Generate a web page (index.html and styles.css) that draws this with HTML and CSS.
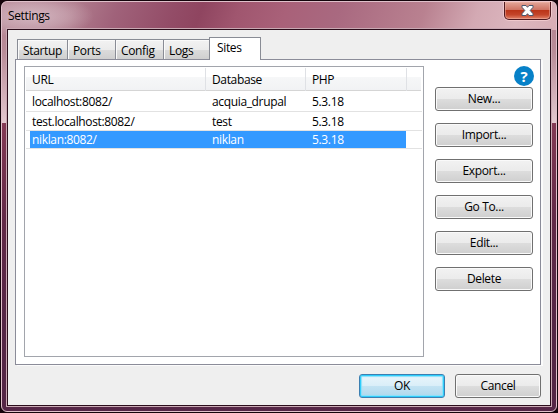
FILE: index.html
```html
<!DOCTYPE html>
<html lang="en">
<head>
<meta charset="utf-8">
<title>Settings</title>
<link rel="stylesheet" href="styles.css">
</head>
<body>
<div class="window">
  <header class="titlebar">
    <span class="title">Settings</span>
    <button class="close" aria-label="Close">
      <svg width="13" height="11" viewBox="0 0 13 11"><path class="x-edge" d="M1 .5h4l1.5 1.8L8 .5h4v1.8L9.2 5.5 12 8.7v1.8H8L6.5 8.7 5 10.500H1V8.700L3.800 5.500 1 2.300z"/></svg>
    </button>
  </header>
  <main class="client">
    <nav class="tabs">
      <span class="tab startup"><span class="t">Startup</span></span>
      <span class="tab ports"><span class="t">Ports</span></span>
      <span class="tab config"><span class="t">Config</span></span>
      <span class="tab logs"><span class="t">Logs</span></span>
      <span class="tab active"><span class="t">Sites</span></span>
    </nav>
    <section class="panel">
      <div class="list">
        <div class="row head"><span>URL</span><span>Database</span><span>PHP</span></div>
        <div class="row first"><span>localhost:8082/</span><span>acquia_drupal</span><span>5.3.18</span></div>
        <div class="row second"><span>test.localhost:8082/</span><span>test</span><span>5.3.18</span></div>
        <div class="row selected"><span>niklan:8082/</span><span>niklan</span><span>5.3.18</span></div>
      </div>
      <div class="side">
        <div class="help">?</div>
        <button class="btn">New...</button>
        <button class="btn">Import...</button>
        <button class="btn">Export...</button>
        <button class="btn">Go To...</button>
        <button class="btn">Edit...</button>
        <button class="btn">Delete</button>
      </div>
    </section>
    <footer class="actions">
      <button class="btn ok">OK</button>
      <button class="btn">Cancel</button>
    </footer>
  </main>
</div>
</body>
</html>
```
FILE: styles.css
```css
* { box-sizing: border-box; }
body {
  margin: 0;
  background: #14040b;
  font: 12px/16px "Open Sans", "Noto Sans", sans-serif;
  letter-spacing: -0.35px;
  color: #000;
  overflow: hidden;
}
.window {
  width: 556px;
  height: 411px;
  margin: 1px;
  padding: 0 5px 4px 5px;
  border: 1px solid #dfc0ca;
  border-radius: 6px;
  background:
    radial-gradient(ellipse 62px 22px at 30px 14px, #e2ced5b0 0, #e2ced560 55%, transparent 100%) no-repeat,
    linear-gradient(110deg, #b58695 0, #b07c8d 70px, #a0627a 110px, #934c67 165px, #8f4560 190px, #a0566f 225px, #a96179 270px, #a96980 320px, #b98190 400px, #d3a9b3 450px, #dcb6be 490px, #d6a6ae 560px) 0 0 / 100% 28px no-repeat,
    linear-gradient(#b27e8f 0, #b98c98 50px, #e3c8cf 121px, #843a55 121px, #622947 220px, #552646 320px, #552646 100%);
}
.titlebar {
  height: 27px;
  display: flex;
  justify-content: space-between;
  align-items: flex-start;
}
.title {
  margin: 6px 0 0 1px;
}
.close {
  width: 47px;
  height: 18px;
  padding: 0;
  margin-right: 0;
  display: flex;
  justify-content: center;
  align-items: center;
  border: 1px solid #4f1a20;
  border-top: 0;
  border-radius: 0 0 5px 5px;
  background: linear-gradient(#e3a699 0, #cf7464 45%, #bb3519 50%, #c4452a 75%, #e2836a 100%);
  box-shadow: 0 0 0 1px #f0c8cc, inset 0 0 0 1px #f0b5a980;
}
.x-edge { fill: #fff; stroke: #4b5870; stroke-width: 1; }
.client {
  width: 544px;
  height: 377px;
  border: 1px solid #2b0d1b;
  outline: 1px solid #c9a9b3;
  background: #efefef;
  padding: 7px 9px 0 7px;
}
.tabs {
  height: 22px;
  display: flex;
  align-items: flex-end;
  padding-left: 2px;
}
.tab {
  height: 20px;
  padding: 3px 0 0 5px;
  border: 1px solid #898c95;
  border-bottom: 0;
  margin-right: -1px;
  box-shadow: inset 1px 1px #fafafa;
  background: linear-gradient(#f2f2f2 0, #ebebeb 50%, #dcdcdc 50%, #cfcfcf 100%);
}
.startup { width: 51px; }
.ports, .config { width: 49px; }
.logs { width: 47px; }
.tab.active {
  width: 52px;
  height: 23px;
  margin-bottom: -1px;
  padding: 2px 0 0 7px;
  background: #fff;
  box-shadow: none;
  z-index: 1;
}
.panel {
  width: 526px;
  height: 306px;
  border: 1px solid #8b8c99;
  box-shadow: 2px 1px #fbfbfb;
  background: #fff;
  display: flex;
  gap: 11px;
  padding: 6px 0 0 8px;
}
.list {
  width: 400px;
  height: 291px;
  border: 1px solid #a2a5ac;
  padding: 1px;
}
.row {
  display: grid;
  grid-template-columns: 180px 100px 101px;
  height: 19px;
  padding-left: 6px;
  border-bottom: 1px solid #e2e2e2;
  line-height: 18px;
}
.row.head {
  height: 23px;
  padding-left: 0;
  border-bottom-color: #d5d5d5;
  background: linear-gradient(#fff 0, #fff 9px, #f6f7f8 9px, #f1f2f4 100%);
  line-height: 23px;
  margin: 0 1px 0 0;
}
.row.head span { border-right: 1px solid #dfe1e5; padding-left: 6px; }
.row.first { height: 21px; line-height: 22px; }
.row.second { line-height: 20px; }
.row.selected {
  height: 18px;
  color: #fff;
  background: linear-gradient(#39f, #39f) 4px 0 / 376px 100% no-repeat;
}
.side {
  display: flex;
  flex-direction: column;
  gap: 12px;
  width: 99px;
}
.help {
  align-self: flex-end;
  width: 20px;
  height: 20px;
  margin-bottom: -11px;
  border-radius: 50%;
  background: #0781c8;
  color: #fff;
  font: bold 15px/20px "Open Sans", sans-serif;
  text-align: center;
}
.btn {
  width: 98px;
  height: 24px;
  padding: 0;
  border: 1px solid #707070;
  border-radius: 3px;
  background: linear-gradient(#f2f2f2 0, #ebebeb 50%, #dddddd 50%, #cfcfcf 100%);
  box-shadow: inset 0 0 0 1px #fafafa;
  font: inherit;
  letter-spacing: inherit;
  color: inherit;
}
.actions {
  display: flex;
  justify-content: flex-end;
  gap: 10px;
  padding-top: 9px;
}
.actions .btn { width: 86px; }
.btn.ok {
  border-color: #3c7fb1;
  background: linear-gradient(#eaf5fb 0, #d9eef8 50%, #c3e3f3 50%, #b0d8ec 100%);
  box-shadow: inset 0 0 0 1px #2fcdfb, inset 0 0 1px 2px #8be0fa;
}
```
